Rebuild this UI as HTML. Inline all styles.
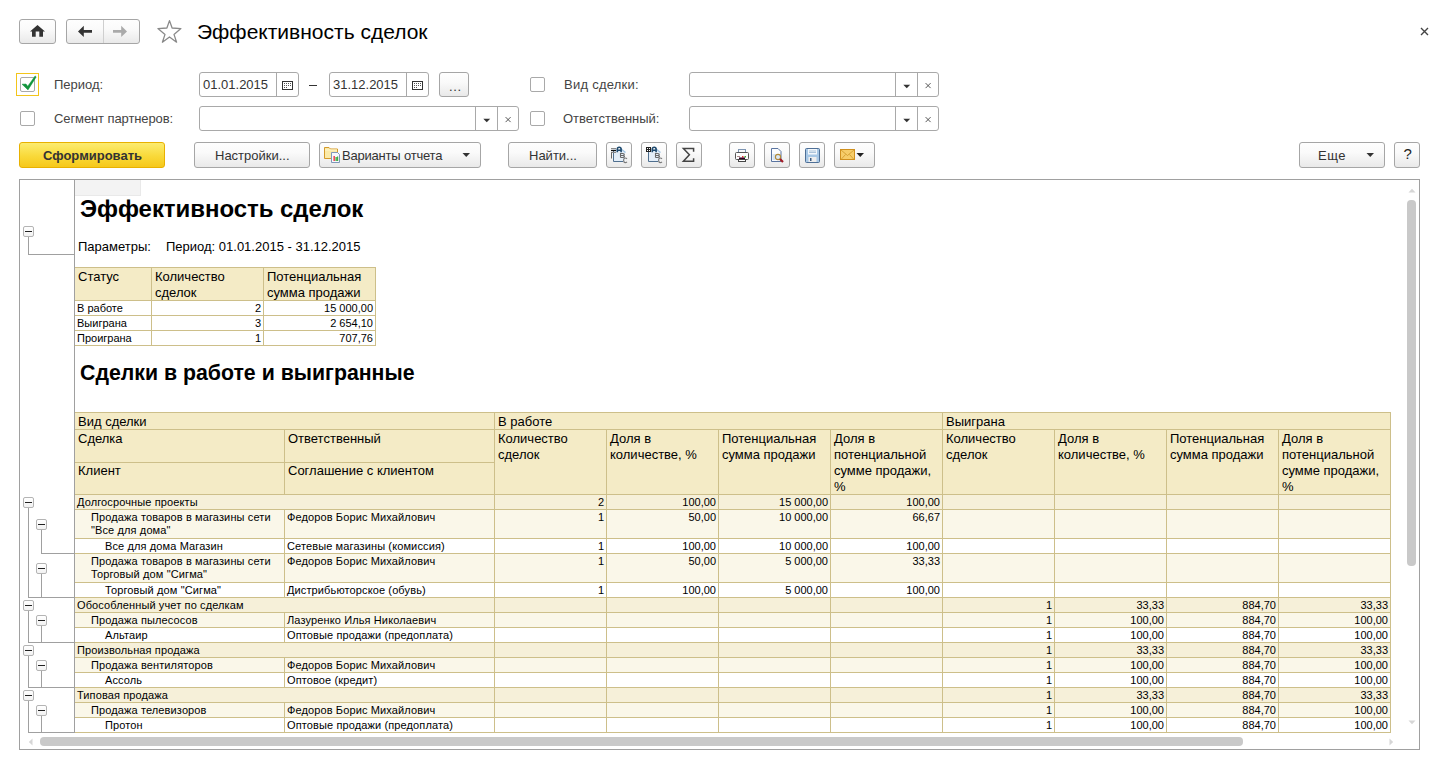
<!DOCTYPE html>
<html><head><meta charset="utf-8"><title>Эффективность сделок</title>
<style>
html,body{margin:0;padding:0;background:#fff;}
body{width:1446px;height:764px;position:relative;overflow:hidden;font-family:"Liberation Sans",sans-serif;}
.b{position:absolute;box-sizing:border-box;}
.t{position:absolute;white-space:nowrap;}
svg.b{overflow:visible}
</style></head><body>
<div class="b" style="left:19px;top:19px;width:37px;height:25px;border:1px solid #a6a6a6;border-radius:3px;background:linear-gradient(#fefefe,#fafafa 40%,#e9e9e9);"></div>
<svg class="b" style="left:29px;top:24px" width="17" height="15" viewBox="0 0 17 15"><path d="M8.5 1 L1 7.6 L3 7.6 L3 12.8 L6.7 12.8 L6.7 7.6 L10.3 7.6 L10.3 12.8 L14 12.8 L14 7.6 L16 7.6 Z" fill="#333"/></svg>
<div class="b" style="left:66px;top:19px;width:74px;height:25px;border:1px solid #a6a6a6;border-radius:3px;background:linear-gradient(#fefefe,#fafafa 40%,#e9e9e9);"></div>
<div class="b" style="left:103px;top:20px;width:1px;height:23px;background:#cfcfcf"></div>
<svg class="b" style="left:76px;top:24px" width="18" height="15" viewBox="0 0 18 15"><path d="M2 7.4 L7.8 1.8 L7.8 6 L16 6 L16 8.8 L7.8 8.8 L7.8 13 Z" fill="#333"/></svg>
<svg class="b" style="left:111px;top:24px" width="18" height="15" viewBox="0 0 18 15"><path d="M16 7.4 L10.2 1.8 L10.2 6 L2 6 L2 8.8 L10.2 8.8 L10.2 13 Z" fill="#aaa"/></svg>
<svg class="b" style="left:152px;top:15px" width="36" height="33" viewBox="152 15 36 33"><path d="M169.5 20.6 L172.1 28 L180.9 28.6 L174 34.4 L176.6 42.2 L169.5 37 L162.4 42.2 L165 34.4 L157.9 28.6 L166.9 28 Z" fill="none" stroke="#8a8a8a" stroke-width="1.3" stroke-linejoin="round"/></svg>
<div class="t" style="left:197px;top:18.22px;font-size:21px;line-height:27px;color:#000;">Эффективность сделок</div>
<svg class="b" style="left:1418px;top:25px" width="13" height="13" viewBox="0 0 13 13"><path d="M3 3 L10 10 M10 3 L3 10" stroke="#444" stroke-width="1.4"/></svg>
<div class="b" style="left:16px;top:73px;width:23px;height:23px;border:1px solid #f3c51b;background:transparent;"></div>
<div class="b" style="left:20px;top:77px;width:15px;height:15px;border:1px solid #a9a9a9;border-radius:2px;background:#fff;"></div>
<svg class="b" style="left:20px;top:73px" width="18" height="20" viewBox="20 73 18 20"><path d="M22 84.2 L26 84 L27.7 86.3 L35.1 75.9 L36.2 76.9 L28 89.9 Z" fill="#12953c" stroke="#12953c" stroke-width="0.5" stroke-linejoin="round"/></svg>
<div class="t" style="left:54px;top:76.00px;font-size:13px;line-height:17px;color:#444;">Период:</div>
<div class="b" style="left:199px;top:72px;width:100px;height:25px;border:1px solid #a9a9a9;border-radius:3px;background:#fff;"></div>
<div class="b" style="left:276px;top:72px;width:1px;height:25px;background:#a9a9a9"></div>
<div class="t" style="left:203px;top:76.00px;font-size:13px;line-height:17px;color:#333;">01.01.2015</div>
<svg class="b" style="left:282px;top:81px" width="11" height="9" viewBox="0 0 11 9"><rect x="0.5" y="0.5" width="10" height="8" fill="#fff" stroke="#333"/><rect x="2" y="2" width="1" height="1" fill="#555"/><rect x="4" y="2" width="1" height="1" fill="#555"/><rect x="6" y="2" width="1" height="1" fill="#555"/><rect x="8" y="2" width="1" height="1" fill="#555"/><rect x="2" y="4" width="1" height="1" fill="#555"/><rect x="4" y="4" width="1" height="1" fill="#555"/><rect x="6" y="4" width="1" height="1" fill="#555"/><rect x="8" y="4" width="1" height="1" fill="#555"/><rect x="2" y="6" width="1" height="1" fill="#555"/><rect x="4" y="6" width="1" height="1" fill="#555"/></svg>
<div class="b" style="left:309px;top:85px;width:8px;height:1px;background:#333"></div>
<div class="b" style="left:329px;top:72px;width:100px;height:25px;border:1px solid #a9a9a9;border-radius:3px;background:#fff;"></div>
<div class="b" style="left:406px;top:72px;width:1px;height:25px;background:#a9a9a9"></div>
<div class="t" style="left:333px;top:76.00px;font-size:13px;line-height:17px;color:#333;">31.12.2015</div>
<svg class="b" style="left:412px;top:81px" width="11" height="9" viewBox="0 0 11 9"><rect x="0.5" y="0.5" width="10" height="8" fill="#fff" stroke="#333"/><rect x="2" y="2" width="1" height="1" fill="#555"/><rect x="4" y="2" width="1" height="1" fill="#555"/><rect x="6" y="2" width="1" height="1" fill="#555"/><rect x="8" y="2" width="1" height="1" fill="#555"/><rect x="2" y="4" width="1" height="1" fill="#555"/><rect x="4" y="4" width="1" height="1" fill="#555"/><rect x="6" y="4" width="1" height="1" fill="#555"/><rect x="8" y="4" width="1" height="1" fill="#555"/><rect x="2" y="6" width="1" height="1" fill="#555"/><rect x="4" y="6" width="1" height="1" fill="#555"/></svg>
<div class="b" style="left:439px;top:72px;width:30px;height:25px;border:1px solid #a6a6a6;border-radius:3px;background:linear-gradient(#fefefe,#fafafa 40%,#e9e9e9);"></div>
<div class="t" style="left:449px;top:78.00px;font-size:13px;line-height:17px;color:#333;letter-spacing:0.6px;">...</div>
<div class="b" style="left:530px;top:77px;width:15px;height:15px;border:1px solid #a9a9a9;border-radius:2px;background:#fff;"></div>
<div class="t" style="left:564px;top:76.00px;font-size:13px;line-height:17px;color:#444;letter-spacing:0.25px;">Вид сделки:</div>
<div class="b" style="left:689px;top:72px;width:250px;height:25px;border:1px solid #a9a9a9;border-radius:3px;background:#fff;"></div>
<div class="b" style="left:895px;top:72px;width:1px;height:25px;background:#a9a9a9"></div>
<div class="b" style="left:917px;top:72px;width:1px;height:25px;background:#a9a9a9"></div>
<svg class="b" style="left:902.5px;top:83.5px" width="8" height="5" viewBox="0 0 8 5"><path d="M0.3 0.8 L7.2 0.8 L3.75 4.3 Z" fill="#333"/></svg>
<svg class="b" style="left:924px;top:81px" width="9" height="9" viewBox="0 0 9 9"><path d="M1.6 2.1 L6.6 7.1 M6.6 2.1 L1.6 7.1" stroke="#444" stroke-width="0.9"/></svg>
<div class="b" style="left:20px;top:111px;width:15px;height:15px;border:1px solid #a9a9a9;border-radius:2px;background:#fff;"></div>
<div class="t" style="left:54px;top:110.00px;font-size:13px;line-height:17px;color:#444;letter-spacing:-0.1px;">Сегмент партнеров:</div>
<div class="b" style="left:199px;top:106px;width:320px;height:25px;border:1px solid #a9a9a9;border-radius:3px;background:#fff;"></div>
<div class="b" style="left:475px;top:106px;width:1px;height:25px;background:#a9a9a9"></div>
<div class="b" style="left:497px;top:106px;width:1px;height:25px;background:#a9a9a9"></div>
<svg class="b" style="left:482.5px;top:117.5px" width="8" height="5" viewBox="0 0 8 5"><path d="M0.3 0.8 L7.2 0.8 L3.75 4.3 Z" fill="#333"/></svg>
<svg class="b" style="left:504px;top:115px" width="9" height="9" viewBox="0 0 9 9"><path d="M1.6 2.1 L6.6 7.1 M6.6 2.1 L1.6 7.1" stroke="#444" stroke-width="0.9"/></svg>
<div class="b" style="left:530px;top:111px;width:15px;height:15px;border:1px solid #a9a9a9;border-radius:2px;background:#fff;"></div>
<div class="t" style="left:563px;top:110.00px;font-size:13px;line-height:17px;color:#444;">Ответственный:</div>
<div class="b" style="left:689px;top:106px;width:250px;height:25px;border:1px solid #a9a9a9;border-radius:3px;background:#fff;"></div>
<div class="b" style="left:895px;top:106px;width:1px;height:25px;background:#a9a9a9"></div>
<div class="b" style="left:917px;top:106px;width:1px;height:25px;background:#a9a9a9"></div>
<svg class="b" style="left:902.5px;top:117.5px" width="8" height="5" viewBox="0 0 8 5"><path d="M0.3 0.8 L7.2 0.8 L3.75 4.3 Z" fill="#333"/></svg>
<svg class="b" style="left:924px;top:115px" width="9" height="9" viewBox="0 0 9 9"><path d="M1.6 2.1 L6.6 7.1 M6.6 2.1 L1.6 7.1" stroke="#444" stroke-width="0.9"/></svg>
<div class="b" style="left:19px;top:142px;width:146px;height:26px;border:1px solid #e8b100;border-radius:3px;background:linear-gradient(#fcec70,#f9d939 55%,#f6c81b);"></div>
<div class="t" style="left:43px;top:147.00px;font-size:13px;line-height:17px;color:#333;font-weight:700;">Сформировать</div>
<div class="b" style="left:194px;top:142px;width:116px;height:26px;border:1px solid #a6a6a6;border-radius:3px;background:linear-gradient(#fefefe,#fafafa 40%,#e9e9e9);"></div>
<div class="t" style="left:215px;top:147.00px;font-size:13px;line-height:17px;color:#333;">Настройки...</div>
<div class="b" style="left:319px;top:142px;width:162px;height:26px;border:1px solid #a6a6a6;border-radius:3px;background:linear-gradient(#fefefe,#fafafa 40%,#e9e9e9);"></div>
<svg class="b" style="left:319px;top:142px" width="26" height="26" viewBox="0 0 26 26"><path d="M5.5 5.5 L10 5.5 L11.5 7 L18.5 7 L18.5 16.5 L5.5 16.5 Z" fill="#fbeaa8" stroke="#d49a2a"/><path d="M6 8 L18 8" stroke="#fff6cc" stroke-width="1"/><path d="M12.5 10.5 L18.5 10.5 L20.5 12.5 L20.5 20.5 L12.5 20.5 Z" fill="#f6f9fd" stroke="#7f97b8"/><rect x="14.5" y="14" width="1.3" height="5" fill="#e23"/><rect x="16.5" y="15" width="1.3" height="4" fill="#3a3"/><rect x="18" y="14.5" width="1.2" height="4.5" fill="#4a4"/></svg>
<div class="t" style="left:342px;top:147.00px;font-size:13px;line-height:17px;color:#333;letter-spacing:-0.2px;">Варианты отчета</div>
<svg class="b" style="left:462px;top:152px" width="9" height="6" viewBox="0 0 9 6"><path d="M0.5 1 L8 1 L4.25 5 Z" fill="#333"/></svg>
<div class="b" style="left:508px;top:142px;width:89px;height:26px;border:1px solid #a6a6a6;border-radius:3px;background:linear-gradient(#fefefe,#fafafa 40%,#e9e9e9);"></div>
<div class="t" style="left:529px;top:147.00px;font-size:13px;line-height:17px;color:#333;">Найти...</div>
<div class="b" style="left:606px;top:142px;width:26px;height:26px;border:1px solid #a6a6a6;border-radius:3px;background:linear-gradient(#fefefe,#fafafa 40%,#e9e9e9);"></div>
<div class="b" style="left:641px;top:142px;width:26px;height:26px;border:1px solid #a6a6a6;border-radius:3px;background:linear-gradient(#fefefe,#fafafa 40%,#e9e9e9);"></div>
<div class="b" style="left:676px;top:142px;width:26px;height:26px;border:1px solid #a6a6a6;border-radius:3px;background:linear-gradient(#fefefe,#fafafa 40%,#e9e9e9);"></div>
<div class="b" style="left:729px;top:142px;width:26px;height:26px;border:1px solid #a6a6a6;border-radius:3px;background:linear-gradient(#fefefe,#fafafa 40%,#e9e9e9);"></div>
<div class="b" style="left:764px;top:142px;width:26px;height:26px;border:1px solid #a6a6a6;border-radius:3px;background:linear-gradient(#fefefe,#fafafa 40%,#e9e9e9);"></div>
<div class="b" style="left:799px;top:142px;width:26px;height:26px;border:1px solid #a6a6a6;border-radius:3px;background:linear-gradient(#fefefe,#fafafa 40%,#e9e9e9);"></div>
<div class="b" style="left:834px;top:142px;width:41px;height:26px;border:1px solid #a6a6a6;border-radius:3px;background:linear-gradient(#fefefe,#fafafa 40%,#e9e9e9);"></div>
<svg class="b" style="left:606px;top:142px" width="26" height="26" viewBox="0 0 26 26"><path d="M7 7 L15 7 L19 10 L19 19.5 L7 19.5 Z" fill="#e4eef8"/><path d="M7.5 9 L7.5 19.5 L17 19.5" fill="none" stroke="#4f6f8f" stroke-width="1"/><path d="M14.5 6.5 L19.5 10.5" stroke="#9cc0e0" stroke-width="1.2"/><path d="M5 6.5 L10 6.5 M5 10.5 L10 10.5" stroke="#888" stroke-width="1"/><path d="M5 8.5 L10 8.5" stroke="#111" stroke-width="1.3"/><path d="M5.5 10.5 L5.5 16.5" stroke="#666" stroke-width="1"/><path d="M11.3 10.2 L11.3 7 Q11.3 5.2 13.2 5.2 Q15.1 5.2 15.1 7 L15.1 10.2 M11.3 8.2 L15.1 8.2" fill="none" stroke="#1f4a6e" stroke-width="1.6"/><path d="M14.5 15.5 L14.5 11.5 L16.8 11.5 Q18.3 11.5 18.3 12.6 Q18.3 13.5 16.8 13.5 L14.5 13.5 M16.8 13.5 Q18.5 13.5 18.5 14.5 Q18.5 15.5 16.8 15.5 L14.5 15.5" fill="none" stroke="#6a6a6a" stroke-width="1.1"/><path d="M21 16.8 Q20.3 16 19.3 16 Q17.6 16 17.6 18.3 Q17.6 20.6 19.3 20.6 Q20.3 20.6 21 19.8" fill="none" stroke="#7a7a7a" stroke-width="1.1"/></svg>
<svg class="b" style="left:641px;top:142px" width="26" height="26" viewBox="0 0 26 26"><path d="M7 7 L15 7 L19 10 L19 19.5 L7 19.5 Z" fill="#e4eef8"/><path d="M7.5 9 L7.5 19.5 L17 19.5" fill="none" stroke="#4f6f8f" stroke-width="1"/><path d="M14.5 6.5 L19.5 10.5" stroke="#9cc0e0" stroke-width="1.2"/><rect x="5.5" y="5.5" width="4" height="4" fill="#fff" stroke="#222" stroke-width="1"/><path d="M7.5 5.5 L7.5 9.5 M5.5 7.5 L9.5 7.5" stroke="#222" stroke-width="1"/><path d="M11.3 10.2 L11.3 7 Q11.3 5.2 13.2 5.2 Q15.1 5.2 15.1 7 L15.1 10.2 M11.3 8.2 L15.1 8.2" fill="none" stroke="#1f4a6e" stroke-width="1.6"/><path d="M14.5 15.5 L14.5 11.5 L16.8 11.5 Q18.3 11.5 18.3 12.6 Q18.3 13.5 16.8 13.5 L14.5 13.5 M16.8 13.5 Q18.5 13.5 18.5 14.5 Q18.5 15.5 16.8 15.5 L14.5 15.5" fill="none" stroke="#6a6a6a" stroke-width="1.1"/><path d="M21 16.8 Q20.3 16 19.3 16 Q17.6 16 17.6 18.3 Q17.6 20.6 19.3 20.6 Q20.3 20.6 21 19.8" fill="none" stroke="#7a7a7a" stroke-width="1.1"/></svg>
<svg class="b" style="left:676px;top:142px" width="26" height="26" viewBox="0 0 26 26"><path d="M17.6 9.8 L17.6 6.6 L7.4 6.6 L13.4 12.8 L7.4 19.2 L17.6 19.2 L17.6 16.2" fill="none" stroke="#444" stroke-width="1.5" stroke-linejoin="miter"/></svg>
<svg class="b" style="left:734px;top:147px" width="17" height="17" viewBox="0 0 17 17"><rect x="4.5" y="2.5" width="7" height="5" fill="#f6f9fc" stroke="#7d95b3"/><rect x="1.5" y="5.5" width="13" height="7" rx="1" fill="#fdfdfd" stroke="#555"/><rect x="3" y="9" width="3" height="1" fill="#a88"/><rect x="8" y="9" width="1.5" height="1.5" fill="#e33"/><rect x="10.5" y="9" width="1.5" height="1.5" fill="#3a3"/><rect x="5" y="10.5" width="6" height="1.5" fill="#302"/><rect x="4.5" y="12.5" width="7" height="2" fill="#fff" stroke="#444"/></svg>
<svg class="b" style="left:769px;top:147px" width="17" height="17" viewBox="0 0 17 17"><path d="M2.5 1.5 L9 1.5 L12 4.5 L12 14.5 L2.5 14.5 Z" fill="#fafcff" stroke="#5a74a0"/><rect x="3.5" y="7" width="3" height="6" fill="#d5e4f3"/><circle cx="9" cy="10" r="2.6" fill="#dbe9f7" stroke="#b08a3a" stroke-width="1.1"/><path d="M11 12 L14 15" stroke="#a01a25" stroke-width="2.2"/></svg>
<svg class="b" style="left:804px;top:147px" width="17" height="17" viewBox="0 0 17 17"><rect x="1.5" y="1.5" width="14" height="14" rx="1" fill="#a8c8e6" stroke="#4e6f96"/><rect x="4" y="2" width="9" height="5.5" fill="#f4f8fc"/><path d="M5 4 L12 4 M5 5.5 L12 5.5" stroke="#9bb6d2" stroke-width="0.8"/><rect x="4.5" y="10" width="8" height="5" fill="#eee"/><rect x="6" y="11" width="1.5" height="3" fill="#3c5a80"/></svg>
<svg class="b" style="left:840px;top:149px" width="15" height="12" viewBox="0 0 15 12"><rect x="0.5" y="0.5" width="14" height="10" fill="#f6cd6a" stroke="#d0901e"/><path d="M1 1 L7.5 6.5 L14 1 M1 10.5 L5.5 5.5 M14 10.5 L9.5 5.5" fill="none" stroke="#c9901f" stroke-width="0.7"/></svg>
<svg class="b" style="left:856px;top:152px" width="9" height="6" viewBox="0 0 9 6"><path d="M0.5 1 L8 1 L4.25 5 Z" fill="#222"/></svg>
<div class="b" style="left:1299px;top:142px;width:86px;height:26px;border:1px solid #a6a6a6;border-radius:3px;background:linear-gradient(#fefefe,#fafafa 40%,#e9e9e9);"></div>
<div class="t" style="left:1318px;top:147.00px;font-size:13px;line-height:17px;color:#333;letter-spacing:0.5px;">Еще</div>
<svg class="b" style="left:1366px;top:152px" width="9" height="6" viewBox="0 0 9 6"><path d="M0.5 1 L8 1 L4.25 5 Z" fill="#333"/></svg>
<div class="b" style="left:1394px;top:142px;width:26px;height:26px;border:1px solid #a6a6a6;border-radius:3px;background:linear-gradient(#fefefe,#fafafa 40%,#e9e9e9);"></div>
<div class="t" style="left:1403.5px;top:144.30px;font-size:15px;line-height:20px;color:#222;">?</div>
<div class="b" style="left:19px;top:179px;width:1401px;height:571px;border:1px solid #a0a0a0;background:#fff;"></div>
<div class="b" style="left:75px;top:180px;width:66px;height:16px;background:#f3f3f3;border-right:1px solid #e9e9e9;border-bottom:1px solid #e9e9e9;box-sizing:border-box"></div>
<div class="b" style="left:74px;top:180px;width:1px;height:553px;background:#a0a0a0"></div>
<div class="b" style="left:23px;top:226px;width:11px;height:11px;border:1px solid #b4b4b4;border-radius:2px;background:linear-gradient(#fff,#f2f2f2);"></div>
<div class="b" style="left:25px;top:231px;width:7px;height:1px;background:#222"></div>
<div class="b" style="left:28px;top:237px;width:1px;height:18px;background:#a0a0a0"></div>
<div class="b" style="left:28px;top:254px;width:47px;height:1px;background:#a0a0a0"></div>
<div class="t" style="left:80px;top:193.18px;font-size:24px;line-height:31px;color:#000;font-weight:700;letter-spacing:-0.05px;">Эффективность сделок</div>
<div class="t" style="left:78px;top:238.00px;font-size:13px;line-height:17px;color:#000;">Параметры:</div>
<div class="t" style="left:166px;top:238.00px;font-size:13px;line-height:17px;color:#000;">Период: 01.01.2015 - 31.12.2015</div>
<div class="b" style="left:74px;top:267px;width:78px;height:34px;background:#f4ebc6;border:1px solid #cdbf8a"></div>
<div class="b" style="left:151px;top:267px;width:113px;height:34px;background:#f4ebc6;border:1px solid #cdbf8a"></div>
<div class="b" style="left:263px;top:267px;width:113px;height:34px;background:#f4ebc6;border:1px solid #cdbf8a"></div>
<div class="b" style="left:74px;top:300px;width:78px;height:16px;background:#fff;border:1px solid #cdbf8a"></div>
<div class="b" style="left:151px;top:300px;width:113px;height:16px;background:#fff;border:1px solid #cdbf8a"></div>
<div class="b" style="left:263px;top:300px;width:113px;height:16px;background:#fff;border:1px solid #cdbf8a"></div>
<div class="t" style="left:77px;top:301.19px;font-size:11px;line-height:14px;color:#000;">В работе</div>
<div class="t" style="right:1185px;top:301.19px;font-size:11px;line-height:14px;color:#000;">2</div>
<div class="t" style="right:1073px;top:301.19px;font-size:11px;line-height:14px;color:#000;">15 000,00</div>
<div class="b" style="left:74px;top:315px;width:78px;height:16px;background:#fff;border:1px solid #cdbf8a"></div>
<div class="b" style="left:151px;top:315px;width:113px;height:16px;background:#fff;border:1px solid #cdbf8a"></div>
<div class="b" style="left:263px;top:315px;width:113px;height:16px;background:#fff;border:1px solid #cdbf8a"></div>
<div class="t" style="left:77px;top:316.19px;font-size:11px;line-height:14px;color:#000;">Выиграна</div>
<div class="t" style="right:1185px;top:316.19px;font-size:11px;line-height:14px;color:#000;">3</div>
<div class="t" style="right:1073px;top:316.19px;font-size:11px;line-height:14px;color:#000;">2 654,10</div>
<div class="b" style="left:74px;top:330px;width:78px;height:16px;background:#fff;border:1px solid #cdbf8a"></div>
<div class="b" style="left:151px;top:330px;width:113px;height:16px;background:#fff;border:1px solid #cdbf8a"></div>
<div class="b" style="left:263px;top:330px;width:113px;height:16px;background:#fff;border:1px solid #cdbf8a"></div>
<div class="t" style="left:77px;top:331.19px;font-size:11px;line-height:14px;color:#000;">Проиграна</div>
<div class="t" style="right:1185px;top:331.19px;font-size:11px;line-height:14px;color:#000;">1</div>
<div class="t" style="right:1073px;top:331.19px;font-size:11px;line-height:14px;color:#000;">707,76</div>
<div class="b" style="left:74px;top:267px;width:1px;height:79px;background:#a0a0a0"></div>
<div class="t" style="left:78px;top:268.00px;font-size:13px;line-height:17px;color:#000;">Статус</div>
<div class="t" style="left:155px;top:268.00px;font-size:13px;line-height:17px;color:#000;">Количество</div>
<div class="t" style="left:155px;top:284.00px;font-size:13px;line-height:17px;color:#000;">сделок</div>
<div class="t" style="left:267px;top:268.00px;font-size:13px;line-height:17px;color:#000;">Потенциальная</div>
<div class="t" style="left:267px;top:284.00px;font-size:13px;line-height:17px;color:#000;">сумма продажи</div>
<div class="t" style="left:80px;top:358.62px;font-size:21.3px;line-height:28px;color:#000;font-weight:700;">Сделки в работе и выигранные</div>
<div class="b" style="left:74px;top:412px;width:421px;height:18px;background:#f4ebc6;border:1px solid #cdbf8a"></div>
<div class="b" style="left:494px;top:412px;width:449px;height:18px;background:#f4ebc6;border:1px solid #cdbf8a"></div>
<div class="b" style="left:942px;top:412px;width:449px;height:18px;background:#f4ebc6;border:1px solid #cdbf8a"></div>
<div class="b" style="left:74px;top:429px;width:211px;height:34px;background:#f4ebc6;border:1px solid #cdbf8a"></div>
<div class="b" style="left:284px;top:429px;width:211px;height:34px;background:#f4ebc6;border:1px solid #cdbf8a"></div>
<div class="b" style="left:74px;top:462px;width:211px;height:33px;background:#f4ebc6;border:1px solid #cdbf8a"></div>
<div class="b" style="left:284px;top:462px;width:211px;height:33px;background:#f4ebc6;border:1px solid #cdbf8a"></div>
<div class="b" style="left:494px;top:429px;width:113px;height:66px;background:#f4ebc6;border:1px solid #cdbf8a"></div>
<div class="b" style="left:606px;top:429px;width:113px;height:66px;background:#f4ebc6;border:1px solid #cdbf8a"></div>
<div class="b" style="left:718px;top:429px;width:113px;height:66px;background:#f4ebc6;border:1px solid #cdbf8a"></div>
<div class="b" style="left:830px;top:429px;width:113px;height:66px;background:#f4ebc6;border:1px solid #cdbf8a"></div>
<div class="b" style="left:942px;top:429px;width:113px;height:66px;background:#f4ebc6;border:1px solid #cdbf8a"></div>
<div class="b" style="left:1054px;top:429px;width:113px;height:66px;background:#f4ebc6;border:1px solid #cdbf8a"></div>
<div class="b" style="left:1166px;top:429px;width:113px;height:66px;background:#f4ebc6;border:1px solid #cdbf8a"></div>
<div class="b" style="left:1278px;top:429px;width:113px;height:66px;background:#f4ebc6;border:1px solid #cdbf8a"></div>
<div class="b" style="left:74px;top:412px;width:1px;height:83px;background:#a0a0a0"></div>
<div class="t" style="left:78px;top:413.00px;font-size:13px;line-height:17px;color:#000;">Вид сделки</div>
<div class="t" style="left:498px;top:413.00px;font-size:13px;line-height:17px;color:#000;">В работе</div>
<div class="t" style="left:946px;top:413.00px;font-size:13px;line-height:17px;color:#000;">Выиграна</div>
<div class="t" style="left:78px;top:430.00px;font-size:13px;line-height:17px;color:#000;">Сделка</div>
<div class="t" style="left:288px;top:430.00px;font-size:13px;line-height:17px;color:#000;">Ответственный</div>
<div class="t" style="left:78px;top:462.00px;font-size:13px;line-height:17px;color:#000;">Клиент</div>
<div class="t" style="left:288px;top:462.00px;font-size:13px;line-height:17px;color:#000;">Соглашение с клиентом</div>
<div class="t" style="left:498px;top:430.00px;font-size:13px;line-height:17px;color:#000;">Количество</div>
<div class="t" style="left:498px;top:446.00px;font-size:13px;line-height:17px;color:#000;">сделок</div>
<div class="t" style="left:610px;top:430.00px;font-size:13px;line-height:17px;color:#000;">Доля в</div>
<div class="t" style="left:610px;top:446.00px;font-size:13px;line-height:17px;color:#000;">количестве, %</div>
<div class="t" style="left:722px;top:430.00px;font-size:13px;line-height:17px;color:#000;">Потенциальная</div>
<div class="t" style="left:722px;top:446.00px;font-size:13px;line-height:17px;color:#000;">сумма продажи</div>
<div class="t" style="left:834px;top:430.00px;font-size:13px;line-height:17px;color:#000;">Доля в</div>
<div class="t" style="left:834px;top:446.00px;font-size:13px;line-height:17px;color:#000;">потенциальной</div>
<div class="t" style="left:834px;top:462.00px;font-size:13px;line-height:17px;color:#000;">сумме продажи,</div>
<div class="t" style="left:834px;top:478.00px;font-size:13px;line-height:17px;color:#000;">%</div>
<div class="t" style="left:946px;top:430.00px;font-size:13px;line-height:17px;color:#000;">Количество</div>
<div class="t" style="left:946px;top:446.00px;font-size:13px;line-height:17px;color:#000;">сделок</div>
<div class="t" style="left:1058px;top:430.00px;font-size:13px;line-height:17px;color:#000;">Доля в</div>
<div class="t" style="left:1058px;top:446.00px;font-size:13px;line-height:17px;color:#000;">количестве, %</div>
<div class="t" style="left:1170px;top:430.00px;font-size:13px;line-height:17px;color:#000;">Потенциальная</div>
<div class="t" style="left:1170px;top:446.00px;font-size:13px;line-height:17px;color:#000;">сумма продажи</div>
<div class="t" style="left:1282px;top:430.00px;font-size:13px;line-height:17px;color:#000;">Доля в</div>
<div class="t" style="left:1282px;top:446.00px;font-size:13px;line-height:17px;color:#000;">потенциальной</div>
<div class="t" style="left:1282px;top:462.00px;font-size:13px;line-height:17px;color:#000;">сумме продажи,</div>
<div class="t" style="left:1282px;top:478.00px;font-size:13px;line-height:17px;color:#000;">%</div>
<div class="b" style="left:74px;top:494px;width:421px;height:16px;background:#f6f0d9;border:1px solid #cdbf8a"></div>
<div class="b" style="left:494px;top:494px;width:113px;height:16px;background:#f6f0d9;border:1px solid #cdbf8a"></div>
<div class="b" style="left:606px;top:494px;width:113px;height:16px;background:#f6f0d9;border:1px solid #cdbf8a"></div>
<div class="b" style="left:718px;top:494px;width:113px;height:16px;background:#f6f0d9;border:1px solid #cdbf8a"></div>
<div class="b" style="left:830px;top:494px;width:113px;height:16px;background:#f6f0d9;border:1px solid #cdbf8a"></div>
<div class="b" style="left:942px;top:494px;width:113px;height:16px;background:#f6f0d9;border:1px solid #cdbf8a"></div>
<div class="b" style="left:1054px;top:494px;width:113px;height:16px;background:#f6f0d9;border:1px solid #cdbf8a"></div>
<div class="b" style="left:1166px;top:494px;width:113px;height:16px;background:#f6f0d9;border:1px solid #cdbf8a"></div>
<div class="b" style="left:1278px;top:494px;width:113px;height:16px;background:#f6f0d9;border:1px solid #cdbf8a"></div>
<div class="t" style="left:77px;top:495.19px;font-size:11px;line-height:14px;color:#000;letter-spacing:0.12px;">Долгосрочные проекты</div>
<div class="t" style="right:842px;top:495.19px;font-size:11px;line-height:14px;color:#000;">2</div>
<div class="t" style="right:730px;top:495.19px;font-size:11px;line-height:14px;color:#000;">100,00</div>
<div class="t" style="right:618px;top:495.19px;font-size:11px;line-height:14px;color:#000;">15 000,00</div>
<div class="t" style="right:506px;top:495.19px;font-size:11px;line-height:14px;color:#000;">100,00</div>
<div class="b" style="left:74px;top:509px;width:211px;height:30px;background:#faf7e9;border:1px solid #cdbf8a"></div>
<div class="b" style="left:284px;top:509px;width:211px;height:30px;background:#faf7e9;border:1px solid #cdbf8a"></div>
<div class="b" style="left:494px;top:509px;width:113px;height:30px;background:#faf7e9;border:1px solid #cdbf8a"></div>
<div class="b" style="left:606px;top:509px;width:113px;height:30px;background:#faf7e9;border:1px solid #cdbf8a"></div>
<div class="b" style="left:718px;top:509px;width:113px;height:30px;background:#faf7e9;border:1px solid #cdbf8a"></div>
<div class="b" style="left:830px;top:509px;width:113px;height:30px;background:#faf7e9;border:1px solid #cdbf8a"></div>
<div class="b" style="left:942px;top:509px;width:113px;height:30px;background:#faf7e9;border:1px solid #cdbf8a"></div>
<div class="b" style="left:1054px;top:509px;width:113px;height:30px;background:#faf7e9;border:1px solid #cdbf8a"></div>
<div class="b" style="left:1166px;top:509px;width:113px;height:30px;background:#faf7e9;border:1px solid #cdbf8a"></div>
<div class="b" style="left:1278px;top:509px;width:113px;height:30px;background:#faf7e9;border:1px solid #cdbf8a"></div>
<div class="t" style="left:91px;top:510.19px;font-size:11px;line-height:14px;color:#000;letter-spacing:0.12px;">Продажа товаров в магазины сети</div>
<div class="t" style="left:91px;top:523.19px;font-size:11px;line-height:14px;color:#000;letter-spacing:0.12px;">"Все для дома"</div>
<div class="t" style="left:287px;top:510.19px;font-size:11px;line-height:14px;color:#000;letter-spacing:0.12px;">Федоров Борис Михайлович</div>
<div class="t" style="right:842px;top:510.19px;font-size:11px;line-height:14px;color:#000;">1</div>
<div class="t" style="right:730px;top:510.19px;font-size:11px;line-height:14px;color:#000;">50,00</div>
<div class="t" style="right:618px;top:510.19px;font-size:11px;line-height:14px;color:#000;">10 000,00</div>
<div class="t" style="right:506px;top:510.19px;font-size:11px;line-height:14px;color:#000;">66,67</div>
<div class="b" style="left:74px;top:538px;width:211px;height:16px;background:#fff;border:1px solid #cdbf8a"></div>
<div class="b" style="left:284px;top:538px;width:211px;height:16px;background:#fff;border:1px solid #cdbf8a"></div>
<div class="b" style="left:494px;top:538px;width:113px;height:16px;background:#fff;border:1px solid #cdbf8a"></div>
<div class="b" style="left:606px;top:538px;width:113px;height:16px;background:#fff;border:1px solid #cdbf8a"></div>
<div class="b" style="left:718px;top:538px;width:113px;height:16px;background:#fff;border:1px solid #cdbf8a"></div>
<div class="b" style="left:830px;top:538px;width:113px;height:16px;background:#fff;border:1px solid #cdbf8a"></div>
<div class="b" style="left:942px;top:538px;width:113px;height:16px;background:#fff;border:1px solid #cdbf8a"></div>
<div class="b" style="left:1054px;top:538px;width:113px;height:16px;background:#fff;border:1px solid #cdbf8a"></div>
<div class="b" style="left:1166px;top:538px;width:113px;height:16px;background:#fff;border:1px solid #cdbf8a"></div>
<div class="b" style="left:1278px;top:538px;width:113px;height:16px;background:#fff;border:1px solid #cdbf8a"></div>
<div class="t" style="left:105px;top:539.19px;font-size:11px;line-height:14px;color:#000;letter-spacing:0.12px;">Все для дома Магазин</div>
<div class="t" style="left:287px;top:539.19px;font-size:11px;line-height:14px;color:#000;letter-spacing:0.12px;">Сетевые магазины (комиссия)</div>
<div class="t" style="right:842px;top:539.19px;font-size:11px;line-height:14px;color:#000;">1</div>
<div class="t" style="right:730px;top:539.19px;font-size:11px;line-height:14px;color:#000;">100,00</div>
<div class="t" style="right:618px;top:539.19px;font-size:11px;line-height:14px;color:#000;">10 000,00</div>
<div class="t" style="right:506px;top:539.19px;font-size:11px;line-height:14px;color:#000;">100,00</div>
<div class="b" style="left:74px;top:553px;width:211px;height:30px;background:#faf7e9;border:1px solid #cdbf8a"></div>
<div class="b" style="left:284px;top:553px;width:211px;height:30px;background:#faf7e9;border:1px solid #cdbf8a"></div>
<div class="b" style="left:494px;top:553px;width:113px;height:30px;background:#faf7e9;border:1px solid #cdbf8a"></div>
<div class="b" style="left:606px;top:553px;width:113px;height:30px;background:#faf7e9;border:1px solid #cdbf8a"></div>
<div class="b" style="left:718px;top:553px;width:113px;height:30px;background:#faf7e9;border:1px solid #cdbf8a"></div>
<div class="b" style="left:830px;top:553px;width:113px;height:30px;background:#faf7e9;border:1px solid #cdbf8a"></div>
<div class="b" style="left:942px;top:553px;width:113px;height:30px;background:#faf7e9;border:1px solid #cdbf8a"></div>
<div class="b" style="left:1054px;top:553px;width:113px;height:30px;background:#faf7e9;border:1px solid #cdbf8a"></div>
<div class="b" style="left:1166px;top:553px;width:113px;height:30px;background:#faf7e9;border:1px solid #cdbf8a"></div>
<div class="b" style="left:1278px;top:553px;width:113px;height:30px;background:#faf7e9;border:1px solid #cdbf8a"></div>
<div class="t" style="left:91px;top:554.19px;font-size:11px;line-height:14px;color:#000;letter-spacing:0.12px;">Продажа товаров в магазины сети</div>
<div class="t" style="left:91px;top:567.19px;font-size:11px;line-height:14px;color:#000;letter-spacing:0.12px;">Торговый дом "Сигма"</div>
<div class="t" style="left:287px;top:554.19px;font-size:11px;line-height:14px;color:#000;letter-spacing:0.12px;">Федоров Борис Михайлович</div>
<div class="t" style="right:842px;top:554.19px;font-size:11px;line-height:14px;color:#000;">1</div>
<div class="t" style="right:730px;top:554.19px;font-size:11px;line-height:14px;color:#000;">50,00</div>
<div class="t" style="right:618px;top:554.19px;font-size:11px;line-height:14px;color:#000;">5 000,00</div>
<div class="t" style="right:506px;top:554.19px;font-size:11px;line-height:14px;color:#000;">33,33</div>
<div class="b" style="left:74px;top:582px;width:211px;height:16px;background:#fff;border:1px solid #cdbf8a"></div>
<div class="b" style="left:284px;top:582px;width:211px;height:16px;background:#fff;border:1px solid #cdbf8a"></div>
<div class="b" style="left:494px;top:582px;width:113px;height:16px;background:#fff;border:1px solid #cdbf8a"></div>
<div class="b" style="left:606px;top:582px;width:113px;height:16px;background:#fff;border:1px solid #cdbf8a"></div>
<div class="b" style="left:718px;top:582px;width:113px;height:16px;background:#fff;border:1px solid #cdbf8a"></div>
<div class="b" style="left:830px;top:582px;width:113px;height:16px;background:#fff;border:1px solid #cdbf8a"></div>
<div class="b" style="left:942px;top:582px;width:113px;height:16px;background:#fff;border:1px solid #cdbf8a"></div>
<div class="b" style="left:1054px;top:582px;width:113px;height:16px;background:#fff;border:1px solid #cdbf8a"></div>
<div class="b" style="left:1166px;top:582px;width:113px;height:16px;background:#fff;border:1px solid #cdbf8a"></div>
<div class="b" style="left:1278px;top:582px;width:113px;height:16px;background:#fff;border:1px solid #cdbf8a"></div>
<div class="t" style="left:105px;top:583.19px;font-size:11px;line-height:14px;color:#000;letter-spacing:0.12px;">Торговый дом "Сигма"</div>
<div class="t" style="left:287px;top:583.19px;font-size:11px;line-height:14px;color:#000;letter-spacing:0.12px;">Дистрибьюторское (обувь)</div>
<div class="t" style="right:842px;top:583.19px;font-size:11px;line-height:14px;color:#000;">1</div>
<div class="t" style="right:730px;top:583.19px;font-size:11px;line-height:14px;color:#000;">100,00</div>
<div class="t" style="right:618px;top:583.19px;font-size:11px;line-height:14px;color:#000;">5 000,00</div>
<div class="t" style="right:506px;top:583.19px;font-size:11px;line-height:14px;color:#000;">100,00</div>
<div class="b" style="left:74px;top:597px;width:421px;height:16px;background:#f6f0d9;border:1px solid #cdbf8a"></div>
<div class="b" style="left:494px;top:597px;width:113px;height:16px;background:#f6f0d9;border:1px solid #cdbf8a"></div>
<div class="b" style="left:606px;top:597px;width:113px;height:16px;background:#f6f0d9;border:1px solid #cdbf8a"></div>
<div class="b" style="left:718px;top:597px;width:113px;height:16px;background:#f6f0d9;border:1px solid #cdbf8a"></div>
<div class="b" style="left:830px;top:597px;width:113px;height:16px;background:#f6f0d9;border:1px solid #cdbf8a"></div>
<div class="b" style="left:942px;top:597px;width:113px;height:16px;background:#f6f0d9;border:1px solid #cdbf8a"></div>
<div class="b" style="left:1054px;top:597px;width:113px;height:16px;background:#f6f0d9;border:1px solid #cdbf8a"></div>
<div class="b" style="left:1166px;top:597px;width:113px;height:16px;background:#f6f0d9;border:1px solid #cdbf8a"></div>
<div class="b" style="left:1278px;top:597px;width:113px;height:16px;background:#f6f0d9;border:1px solid #cdbf8a"></div>
<div class="t" style="left:77px;top:598.19px;font-size:11px;line-height:14px;color:#000;letter-spacing:0.12px;">Обособленный учет по сделкам</div>
<div class="t" style="right:394px;top:598.19px;font-size:11px;line-height:14px;color:#000;">1</div>
<div class="t" style="right:282px;top:598.19px;font-size:11px;line-height:14px;color:#000;">33,33</div>
<div class="t" style="right:170px;top:598.19px;font-size:11px;line-height:14px;color:#000;">884,70</div>
<div class="t" style="right:58px;top:598.19px;font-size:11px;line-height:14px;color:#000;">33,33</div>
<div class="b" style="left:74px;top:612px;width:211px;height:16px;background:#faf7e9;border:1px solid #cdbf8a"></div>
<div class="b" style="left:284px;top:612px;width:211px;height:16px;background:#faf7e9;border:1px solid #cdbf8a"></div>
<div class="b" style="left:494px;top:612px;width:113px;height:16px;background:#faf7e9;border:1px solid #cdbf8a"></div>
<div class="b" style="left:606px;top:612px;width:113px;height:16px;background:#faf7e9;border:1px solid #cdbf8a"></div>
<div class="b" style="left:718px;top:612px;width:113px;height:16px;background:#faf7e9;border:1px solid #cdbf8a"></div>
<div class="b" style="left:830px;top:612px;width:113px;height:16px;background:#faf7e9;border:1px solid #cdbf8a"></div>
<div class="b" style="left:942px;top:612px;width:113px;height:16px;background:#faf7e9;border:1px solid #cdbf8a"></div>
<div class="b" style="left:1054px;top:612px;width:113px;height:16px;background:#faf7e9;border:1px solid #cdbf8a"></div>
<div class="b" style="left:1166px;top:612px;width:113px;height:16px;background:#faf7e9;border:1px solid #cdbf8a"></div>
<div class="b" style="left:1278px;top:612px;width:113px;height:16px;background:#faf7e9;border:1px solid #cdbf8a"></div>
<div class="t" style="left:91px;top:613.19px;font-size:11px;line-height:14px;color:#000;letter-spacing:0.12px;">Продажа пылесосов</div>
<div class="t" style="left:287px;top:613.19px;font-size:11px;line-height:14px;color:#000;letter-spacing:0.12px;">Лазуренко Илья Николаевич</div>
<div class="t" style="right:394px;top:613.19px;font-size:11px;line-height:14px;color:#000;">1</div>
<div class="t" style="right:282px;top:613.19px;font-size:11px;line-height:14px;color:#000;">100,00</div>
<div class="t" style="right:170px;top:613.19px;font-size:11px;line-height:14px;color:#000;">884,70</div>
<div class="t" style="right:58px;top:613.19px;font-size:11px;line-height:14px;color:#000;">100,00</div>
<div class="b" style="left:74px;top:627px;width:211px;height:16px;background:#fff;border:1px solid #cdbf8a"></div>
<div class="b" style="left:284px;top:627px;width:211px;height:16px;background:#fff;border:1px solid #cdbf8a"></div>
<div class="b" style="left:494px;top:627px;width:113px;height:16px;background:#fff;border:1px solid #cdbf8a"></div>
<div class="b" style="left:606px;top:627px;width:113px;height:16px;background:#fff;border:1px solid #cdbf8a"></div>
<div class="b" style="left:718px;top:627px;width:113px;height:16px;background:#fff;border:1px solid #cdbf8a"></div>
<div class="b" style="left:830px;top:627px;width:113px;height:16px;background:#fff;border:1px solid #cdbf8a"></div>
<div class="b" style="left:942px;top:627px;width:113px;height:16px;background:#fff;border:1px solid #cdbf8a"></div>
<div class="b" style="left:1054px;top:627px;width:113px;height:16px;background:#fff;border:1px solid #cdbf8a"></div>
<div class="b" style="left:1166px;top:627px;width:113px;height:16px;background:#fff;border:1px solid #cdbf8a"></div>
<div class="b" style="left:1278px;top:627px;width:113px;height:16px;background:#fff;border:1px solid #cdbf8a"></div>
<div class="t" style="left:105px;top:628.19px;font-size:11px;line-height:14px;color:#000;letter-spacing:0.12px;">Альтаир</div>
<div class="t" style="left:287px;top:628.19px;font-size:11px;line-height:14px;color:#000;letter-spacing:0.12px;">Оптовые продажи (предоплата)</div>
<div class="t" style="right:394px;top:628.19px;font-size:11px;line-height:14px;color:#000;">1</div>
<div class="t" style="right:282px;top:628.19px;font-size:11px;line-height:14px;color:#000;">100,00</div>
<div class="t" style="right:170px;top:628.19px;font-size:11px;line-height:14px;color:#000;">884,70</div>
<div class="t" style="right:58px;top:628.19px;font-size:11px;line-height:14px;color:#000;">100,00</div>
<div class="b" style="left:74px;top:642px;width:421px;height:16px;background:#f6f0d9;border:1px solid #cdbf8a"></div>
<div class="b" style="left:494px;top:642px;width:113px;height:16px;background:#f6f0d9;border:1px solid #cdbf8a"></div>
<div class="b" style="left:606px;top:642px;width:113px;height:16px;background:#f6f0d9;border:1px solid #cdbf8a"></div>
<div class="b" style="left:718px;top:642px;width:113px;height:16px;background:#f6f0d9;border:1px solid #cdbf8a"></div>
<div class="b" style="left:830px;top:642px;width:113px;height:16px;background:#f6f0d9;border:1px solid #cdbf8a"></div>
<div class="b" style="left:942px;top:642px;width:113px;height:16px;background:#f6f0d9;border:1px solid #cdbf8a"></div>
<div class="b" style="left:1054px;top:642px;width:113px;height:16px;background:#f6f0d9;border:1px solid #cdbf8a"></div>
<div class="b" style="left:1166px;top:642px;width:113px;height:16px;background:#f6f0d9;border:1px solid #cdbf8a"></div>
<div class="b" style="left:1278px;top:642px;width:113px;height:16px;background:#f6f0d9;border:1px solid #cdbf8a"></div>
<div class="t" style="left:77px;top:643.19px;font-size:11px;line-height:14px;color:#000;letter-spacing:0.12px;">Произвольная продажа</div>
<div class="t" style="right:394px;top:643.19px;font-size:11px;line-height:14px;color:#000;">1</div>
<div class="t" style="right:282px;top:643.19px;font-size:11px;line-height:14px;color:#000;">33,33</div>
<div class="t" style="right:170px;top:643.19px;font-size:11px;line-height:14px;color:#000;">884,70</div>
<div class="t" style="right:58px;top:643.19px;font-size:11px;line-height:14px;color:#000;">33,33</div>
<div class="b" style="left:74px;top:657px;width:211px;height:16px;background:#faf7e9;border:1px solid #cdbf8a"></div>
<div class="b" style="left:284px;top:657px;width:211px;height:16px;background:#faf7e9;border:1px solid #cdbf8a"></div>
<div class="b" style="left:494px;top:657px;width:113px;height:16px;background:#faf7e9;border:1px solid #cdbf8a"></div>
<div class="b" style="left:606px;top:657px;width:113px;height:16px;background:#faf7e9;border:1px solid #cdbf8a"></div>
<div class="b" style="left:718px;top:657px;width:113px;height:16px;background:#faf7e9;border:1px solid #cdbf8a"></div>
<div class="b" style="left:830px;top:657px;width:113px;height:16px;background:#faf7e9;border:1px solid #cdbf8a"></div>
<div class="b" style="left:942px;top:657px;width:113px;height:16px;background:#faf7e9;border:1px solid #cdbf8a"></div>
<div class="b" style="left:1054px;top:657px;width:113px;height:16px;background:#faf7e9;border:1px solid #cdbf8a"></div>
<div class="b" style="left:1166px;top:657px;width:113px;height:16px;background:#faf7e9;border:1px solid #cdbf8a"></div>
<div class="b" style="left:1278px;top:657px;width:113px;height:16px;background:#faf7e9;border:1px solid #cdbf8a"></div>
<div class="t" style="left:91px;top:658.19px;font-size:11px;line-height:14px;color:#000;letter-spacing:0.12px;">Продажа вентиляторов</div>
<div class="t" style="left:287px;top:658.19px;font-size:11px;line-height:14px;color:#000;letter-spacing:0.12px;">Федоров Борис Михайлович</div>
<div class="t" style="right:394px;top:658.19px;font-size:11px;line-height:14px;color:#000;">1</div>
<div class="t" style="right:282px;top:658.19px;font-size:11px;line-height:14px;color:#000;">100,00</div>
<div class="t" style="right:170px;top:658.19px;font-size:11px;line-height:14px;color:#000;">884,70</div>
<div class="t" style="right:58px;top:658.19px;font-size:11px;line-height:14px;color:#000;">100,00</div>
<div class="b" style="left:74px;top:672px;width:211px;height:16px;background:#fff;border:1px solid #cdbf8a"></div>
<div class="b" style="left:284px;top:672px;width:211px;height:16px;background:#fff;border:1px solid #cdbf8a"></div>
<div class="b" style="left:494px;top:672px;width:113px;height:16px;background:#fff;border:1px solid #cdbf8a"></div>
<div class="b" style="left:606px;top:672px;width:113px;height:16px;background:#fff;border:1px solid #cdbf8a"></div>
<div class="b" style="left:718px;top:672px;width:113px;height:16px;background:#fff;border:1px solid #cdbf8a"></div>
<div class="b" style="left:830px;top:672px;width:113px;height:16px;background:#fff;border:1px solid #cdbf8a"></div>
<div class="b" style="left:942px;top:672px;width:113px;height:16px;background:#fff;border:1px solid #cdbf8a"></div>
<div class="b" style="left:1054px;top:672px;width:113px;height:16px;background:#fff;border:1px solid #cdbf8a"></div>
<div class="b" style="left:1166px;top:672px;width:113px;height:16px;background:#fff;border:1px solid #cdbf8a"></div>
<div class="b" style="left:1278px;top:672px;width:113px;height:16px;background:#fff;border:1px solid #cdbf8a"></div>
<div class="t" style="left:105px;top:673.19px;font-size:11px;line-height:14px;color:#000;letter-spacing:0.12px;">Ассоль</div>
<div class="t" style="left:287px;top:673.19px;font-size:11px;line-height:14px;color:#000;letter-spacing:0.12px;">Оптовое (кредит)</div>
<div class="t" style="right:394px;top:673.19px;font-size:11px;line-height:14px;color:#000;">1</div>
<div class="t" style="right:282px;top:673.19px;font-size:11px;line-height:14px;color:#000;">100,00</div>
<div class="t" style="right:170px;top:673.19px;font-size:11px;line-height:14px;color:#000;">884,70</div>
<div class="t" style="right:58px;top:673.19px;font-size:11px;line-height:14px;color:#000;">100,00</div>
<div class="b" style="left:74px;top:687px;width:421px;height:16px;background:#f6f0d9;border:1px solid #cdbf8a"></div>
<div class="b" style="left:494px;top:687px;width:113px;height:16px;background:#f6f0d9;border:1px solid #cdbf8a"></div>
<div class="b" style="left:606px;top:687px;width:113px;height:16px;background:#f6f0d9;border:1px solid #cdbf8a"></div>
<div class="b" style="left:718px;top:687px;width:113px;height:16px;background:#f6f0d9;border:1px solid #cdbf8a"></div>
<div class="b" style="left:830px;top:687px;width:113px;height:16px;background:#f6f0d9;border:1px solid #cdbf8a"></div>
<div class="b" style="left:942px;top:687px;width:113px;height:16px;background:#f6f0d9;border:1px solid #cdbf8a"></div>
<div class="b" style="left:1054px;top:687px;width:113px;height:16px;background:#f6f0d9;border:1px solid #cdbf8a"></div>
<div class="b" style="left:1166px;top:687px;width:113px;height:16px;background:#f6f0d9;border:1px solid #cdbf8a"></div>
<div class="b" style="left:1278px;top:687px;width:113px;height:16px;background:#f6f0d9;border:1px solid #cdbf8a"></div>
<div class="t" style="left:77px;top:688.19px;font-size:11px;line-height:14px;color:#000;letter-spacing:0.12px;">Типовая продажа</div>
<div class="t" style="right:394px;top:688.19px;font-size:11px;line-height:14px;color:#000;">1</div>
<div class="t" style="right:282px;top:688.19px;font-size:11px;line-height:14px;color:#000;">33,33</div>
<div class="t" style="right:170px;top:688.19px;font-size:11px;line-height:14px;color:#000;">884,70</div>
<div class="t" style="right:58px;top:688.19px;font-size:11px;line-height:14px;color:#000;">33,33</div>
<div class="b" style="left:74px;top:702px;width:211px;height:16px;background:#faf7e9;border:1px solid #cdbf8a"></div>
<div class="b" style="left:284px;top:702px;width:211px;height:16px;background:#faf7e9;border:1px solid #cdbf8a"></div>
<div class="b" style="left:494px;top:702px;width:113px;height:16px;background:#faf7e9;border:1px solid #cdbf8a"></div>
<div class="b" style="left:606px;top:702px;width:113px;height:16px;background:#faf7e9;border:1px solid #cdbf8a"></div>
<div class="b" style="left:718px;top:702px;width:113px;height:16px;background:#faf7e9;border:1px solid #cdbf8a"></div>
<div class="b" style="left:830px;top:702px;width:113px;height:16px;background:#faf7e9;border:1px solid #cdbf8a"></div>
<div class="b" style="left:942px;top:702px;width:113px;height:16px;background:#faf7e9;border:1px solid #cdbf8a"></div>
<div class="b" style="left:1054px;top:702px;width:113px;height:16px;background:#faf7e9;border:1px solid #cdbf8a"></div>
<div class="b" style="left:1166px;top:702px;width:113px;height:16px;background:#faf7e9;border:1px solid #cdbf8a"></div>
<div class="b" style="left:1278px;top:702px;width:113px;height:16px;background:#faf7e9;border:1px solid #cdbf8a"></div>
<div class="t" style="left:91px;top:703.19px;font-size:11px;line-height:14px;color:#000;letter-spacing:0.12px;">Продажа телевизоров</div>
<div class="t" style="left:287px;top:703.19px;font-size:11px;line-height:14px;color:#000;letter-spacing:0.12px;">Федоров Борис Михайлович</div>
<div class="t" style="right:394px;top:703.19px;font-size:11px;line-height:14px;color:#000;">1</div>
<div class="t" style="right:282px;top:703.19px;font-size:11px;line-height:14px;color:#000;">100,00</div>
<div class="t" style="right:170px;top:703.19px;font-size:11px;line-height:14px;color:#000;">884,70</div>
<div class="t" style="right:58px;top:703.19px;font-size:11px;line-height:14px;color:#000;">100,00</div>
<div class="b" style="left:74px;top:717px;width:211px;height:16px;background:#fff;border:1px solid #cdbf8a"></div>
<div class="b" style="left:284px;top:717px;width:211px;height:16px;background:#fff;border:1px solid #cdbf8a"></div>
<div class="b" style="left:494px;top:717px;width:113px;height:16px;background:#fff;border:1px solid #cdbf8a"></div>
<div class="b" style="left:606px;top:717px;width:113px;height:16px;background:#fff;border:1px solid #cdbf8a"></div>
<div class="b" style="left:718px;top:717px;width:113px;height:16px;background:#fff;border:1px solid #cdbf8a"></div>
<div class="b" style="left:830px;top:717px;width:113px;height:16px;background:#fff;border:1px solid #cdbf8a"></div>
<div class="b" style="left:942px;top:717px;width:113px;height:16px;background:#fff;border:1px solid #cdbf8a"></div>
<div class="b" style="left:1054px;top:717px;width:113px;height:16px;background:#fff;border:1px solid #cdbf8a"></div>
<div class="b" style="left:1166px;top:717px;width:113px;height:16px;background:#fff;border:1px solid #cdbf8a"></div>
<div class="b" style="left:1278px;top:717px;width:113px;height:16px;background:#fff;border:1px solid #cdbf8a"></div>
<div class="t" style="left:105px;top:718.19px;font-size:11px;line-height:14px;color:#000;letter-spacing:0.12px;">Протон</div>
<div class="t" style="left:287px;top:718.19px;font-size:11px;line-height:14px;color:#000;letter-spacing:0.12px;">Оптовые продажи (предоплата)</div>
<div class="t" style="right:394px;top:718.19px;font-size:11px;line-height:14px;color:#000;">1</div>
<div class="t" style="right:282px;top:718.19px;font-size:11px;line-height:14px;color:#000;">100,00</div>
<div class="t" style="right:170px;top:718.19px;font-size:11px;line-height:14px;color:#000;">884,70</div>
<div class="t" style="right:58px;top:718.19px;font-size:11px;line-height:14px;color:#000;">100,00</div>
<div class="b" style="left:74px;top:494px;width:1px;height:239px;background:#a0a0a0"></div>
<div class="b" style="left:23px;top:497px;width:11px;height:11px;border:1px solid #b4b4b4;border-radius:2px;background:linear-gradient(#fff,#f2f2f2);"></div>
<div class="b" style="left:25px;top:502px;width:7px;height:1px;background:#222"></div>
<div class="b" style="left:28px;top:508px;width:1px;height:90px;background:#a0a0a0"></div>
<div class="b" style="left:28px;top:597px;width:47px;height:1px;background:#a0a0a0"></div>
<div class="b" style="left:36px;top:519px;width:11px;height:11px;border:1px solid #b4b4b4;border-radius:2px;background:linear-gradient(#fff,#f2f2f2);"></div>
<div class="b" style="left:38px;top:524px;width:7px;height:1px;background:#222"></div>
<div class="b" style="left:41px;top:530px;width:1px;height:24px;background:#a0a0a0"></div>
<div class="b" style="left:41px;top:553px;width:34px;height:1px;background:#a0a0a0"></div>
<div class="b" style="left:36px;top:563px;width:11px;height:11px;border:1px solid #b4b4b4;border-radius:2px;background:linear-gradient(#fff,#f2f2f2);"></div>
<div class="b" style="left:38px;top:568px;width:7px;height:1px;background:#222"></div>
<div class="b" style="left:41px;top:574px;width:1px;height:24px;background:#a0a0a0"></div>
<div class="b" style="left:23px;top:600px;width:11px;height:11px;border:1px solid #b4b4b4;border-radius:2px;background:linear-gradient(#fff,#f2f2f2);"></div>
<div class="b" style="left:25px;top:605px;width:7px;height:1px;background:#222"></div>
<div class="b" style="left:28px;top:611px;width:1px;height:32px;background:#a0a0a0"></div>
<div class="b" style="left:28px;top:642px;width:47px;height:1px;background:#a0a0a0"></div>
<div class="b" style="left:36px;top:615px;width:11px;height:11px;border:1px solid #b4b4b4;border-radius:2px;background:linear-gradient(#fff,#f2f2f2);"></div>
<div class="b" style="left:38px;top:620px;width:7px;height:1px;background:#222"></div>
<div class="b" style="left:41px;top:626px;width:1px;height:17px;background:#a0a0a0"></div>
<div class="b" style="left:23px;top:645px;width:11px;height:11px;border:1px solid #b4b4b4;border-radius:2px;background:linear-gradient(#fff,#f2f2f2);"></div>
<div class="b" style="left:25px;top:650px;width:7px;height:1px;background:#222"></div>
<div class="b" style="left:28px;top:656px;width:1px;height:32px;background:#a0a0a0"></div>
<div class="b" style="left:28px;top:687px;width:47px;height:1px;background:#a0a0a0"></div>
<div class="b" style="left:36px;top:660px;width:11px;height:11px;border:1px solid #b4b4b4;border-radius:2px;background:linear-gradient(#fff,#f2f2f2);"></div>
<div class="b" style="left:38px;top:665px;width:7px;height:1px;background:#222"></div>
<div class="b" style="left:41px;top:671px;width:1px;height:17px;background:#a0a0a0"></div>
<div class="b" style="left:23px;top:690px;width:11px;height:11px;border:1px solid #b4b4b4;border-radius:2px;background:linear-gradient(#fff,#f2f2f2);"></div>
<div class="b" style="left:25px;top:695px;width:7px;height:1px;background:#222"></div>
<div class="b" style="left:28px;top:701px;width:1px;height:32px;background:#a0a0a0"></div>
<div class="b" style="left:28px;top:732px;width:47px;height:1px;background:#a0a0a0"></div>
<div class="b" style="left:36px;top:705px;width:11px;height:11px;border:1px solid #b4b4b4;border-radius:2px;background:linear-gradient(#fff,#f2f2f2);"></div>
<div class="b" style="left:38px;top:710px;width:7px;height:1px;background:#222"></div>
<div class="b" style="left:41px;top:716px;width:1px;height:17px;background:#a0a0a0"></div>
<div class="b" style="left:1407px;top:200px;width:9px;height:366px;background:#c9c9c9;border-radius:4px"></div>
<svg class="b" style="left:1408px;top:188px" width="8" height="5" viewBox="0 0 8 5"><path d="M0.5 4.5 L7.5 4.5 L4 0.8 Z" fill="#d6d6d6"/></svg>
<svg class="b" style="left:1408px;top:720px" width="8" height="5" viewBox="0 0 8 5"><path d="M0.5 0.5 L7.5 0.5 L4 4.2 Z" fill="#d6d6d6"/></svg>
<div class="b" style="left:40px;top:737px;width:1203px;height:9px;background:#c9c9c9;border-radius:4px"></div>
<svg class="b" style="left:28px;top:738px" width="5" height="8" viewBox="0 0 5 8"><path d="M4.5 0.5 L4.5 7.5 L0.8 4 Z" fill="#d6d6d6"/></svg>
<svg class="b" style="left:1389px;top:738px" width="5" height="8" viewBox="0 0 5 8"><path d="M0.5 0.5 L0.5 7.5 L4.2 4 Z" fill="#d6d6d6"/></svg>
</body></html>
